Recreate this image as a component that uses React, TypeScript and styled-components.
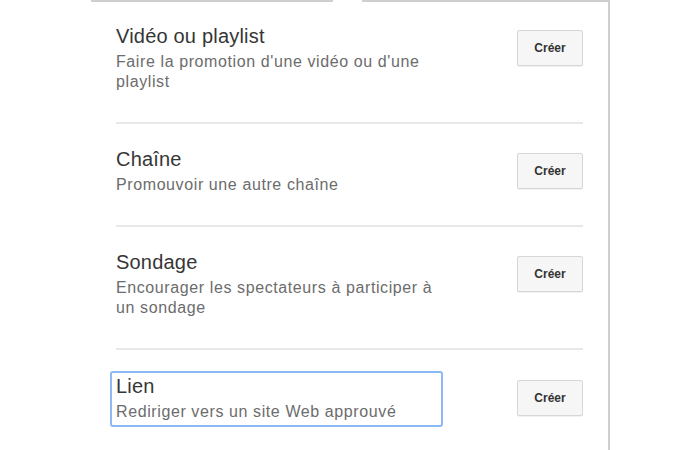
import React from "react";
import styled, { createGlobalStyle } from "styled-components";

const Global = createGlobalStyle`
  html, body { margin: 0; padding: 0; background: #ffffff; }
  body { font-family: "Liberation Sans", Arial, sans-serif; }
`;

const Page = styled.div`
  width: 700px;
  height: 450px;
  overflow: hidden;
  background: #ffffff;
  padding-left: 91px;
  box-sizing: border-box;
`;

const Panel = styled.div`
  width: 519px;
  height: 450px;
  border-right: 2px solid #cfcfcf;
  box-sizing: border-box;
  display: flex;
  flex-direction: column;
`;

const TopEdge = styled.div`
  display: flex;
  height: 2px;
  gap: 29px;
`;

const EdgeSegment = styled.div<{ $w?: number }>`
  height: 2px;
  background: #cfcfcf;
  ${(p) => (p.$w ? `width: ${p.$w}px;` : "flex: 1;")}
`;

const List = styled.div`
  padding: 0 25px;
  display: flex;
  flex-direction: column;
`;

const Section = styled.div<{ $last?: boolean }>`
  display: flex;
  justify-content: space-between;
  align-items: flex-start;
  padding: ${(p) => (p.$last ? "24px 0 0" : "23px 0 30px")};
  border-bottom: ${(p) => (p.$last ? "none" : "2px solid #e8e8e8")};
  &:first-child {
    padding-top: 22px;
  }
`;

const Info = styled.div<{ $focused?: boolean }>`
  width: 330px;
  box-sizing: border-box;
  ${(p) =>
    p.$focused
      ? `
    margin-left: -6px;
    margin-top: -3px;
    padding: 1px 4px 3px 4px;
    border: 2px solid #8cb8f3;
    border-radius: 3px;
    width: 333px;
  `
      : ""}
`;

const Title = styled.div`
  font-size: 20px;
  line-height: 24px;
  letter-spacing: 0.2px;
  color: #363636;
  margin-bottom: 4px;
`;

const Desc = styled.div`
  font-size: 16px;
  line-height: 20px;
  letter-spacing: 0.6px;
  color: #6c6c6c;
`;

const CreateButton = styled.button`
  width: 66px;
  height: 36px;
  margin-top: 6px;
  padding: 0;
  background: #f6f6f6;
  border: 1px solid #d6d6d6;
  border-radius: 2px;
  font-family: "Liberation Sans", Arial, sans-serif;
  font-weight: 700;
  font-size: 12px;
  color: #333333;
  box-shadow: 0 1px 0 rgba(0, 0, 0, 0.05);
  cursor: pointer;
`;

const items = [
  {
    title: "Vidéo ou playlist",
    desc: "Faire la promotion d'une vidéo ou d'une playlist",
  },
  { title: "Chaîne", desc: "Promouvoir une autre chaîne" },
  {
    title: "Sondage",
    desc: "Encourager les spectateurs à participer à un sondage",
  },
  { title: "Lien", desc: "Rediriger vers un site Web approuvé", focused: true },
];

export default function App() {
  return (
    <>
      <Global />
      <Page>
        <Panel>
          <TopEdge>
            <EdgeSegment $w={242} />
            <EdgeSegment />
          </TopEdge>
          <List>
            {items.map((it, i) => (
              <Section key={it.title} $last={i === items.length - 1}>
                <Info $focused={it.focused}>
                  <Title>{it.title}</Title>
                  <Desc>{it.desc}</Desc>
                </Info>
                <CreateButton>Créer</CreateButton>
              </Section>
            ))}
          </List>
        </Panel>
      </Page>
    </>
  );
}
